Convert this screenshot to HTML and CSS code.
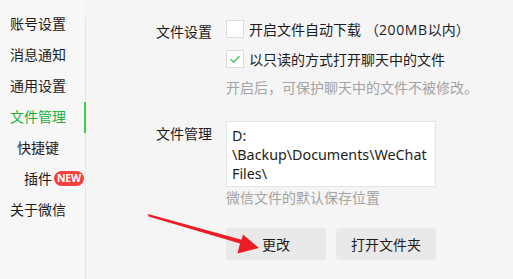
FILE: index.html
```html
<!DOCTYPE html>
<html lang="zh-CN">
<head>
<meta charset="utf-8">
<title>设置</title>
<link rel="stylesheet" href="styles.css">
</head>
<body>
<div class="app">
  <nav class="sidebar">
    <div class="nav-item">账号设置</div>
    <div class="nav-item">消息通知</div>
    <div class="nav-item">通用设置</div>
    <div class="nav-item active">文件管理</div>
    <div class="nav-item sub1">快捷键</div>
    <div class="nav-item sub2">插件<span class="badge">NEW</span></div>
    <div class="nav-item">关于微信</div>
  </nav>
  <main class="content">
    <section class="group">
      <div class="label first">文件设置</div>
      <div class="controls">
        <div class="option"><span class="check"></span><span>开启文件自动下载<span class="paren open">（</span><span class="latin">200MB</span>以内<span class="paren close">）</span></span></div>
        <div class="option"><span class="check on"><svg viewBox="0 0 18 18" width="18" height="18"><path d="M4.5 9.2 L7.6 12 L13.5 6" fill="none" stroke="#3fc45a" stroke-width="1.3"/></svg></span><span>以只读的方式打开聊天中的文件</span></div>
        <div class="hint h1">开启后，可保护聊天中的文件不被修改。</div>
      </div>
    </section>
    <section class="group g2">
      <div class="label second">文件管理</div>
      <div class="controls">
        <div class="path">D:<br>\Backup\Documents\WeChat<br>Files\</div>
        <div class="hint">微信文件的默认保存位置</div>
        <div class="buttons">
          <button class="btn">更改</button>
          <button class="btn">打开文件夹</button>
        </div>
      </div>
    </section>
  </main>
</div>
<svg class="arrow" width="513" height="279" viewBox="0 0 513 279">
  <polygon points="148,214 148.6,216.6 240,243.5 237.5,253.5 259,248 243,234.5 241.5,239.8" fill="#ec1c24"/>
</svg>
</body>
</html>
```
FILE: styles.css
```css
html, body {
  margin: 0;
  padding: 0;
}
body {
  width: 513px;
  height: 279px;
  overflow: hidden;
  font-family: "Noto Sans CJK SC", "Noto Sans", sans-serif;
  font-size: 14px;
  color: #1c1c1c;
  background: #f5f5f5;
  position: relative;
  text-spacing-trim: space-all;
}
.app {
  display: flex;
  height: 279px;
}
.sidebar {
  width: 85px;
  background: #f7f7f7;
  padding-top: 8px;
  box-sizing: border-box;
  position: relative;
  display: flex;
  flex-direction: column;
}
.sidebar::after {
  content: "";
  position: absolute;
  right: -1px;
  top: 17px;
  bottom: 0;
  width: 1px;
  background: #e2e2e2;
}
.nav-item {
  height: 31px;
  line-height: 31px;
  padding-left: 10px;
  position: relative;
  display: flex;
  align-items: center;
  white-space: nowrap;
}
.nav-item.active {
  color: #22b03a;
}
.nav-item.active::after {
  content: "";
  position: absolute;
  right: -1px;
  top: 1px;
  width: 2px;
  height: 31px;
  background: #3ccc4a;
  z-index: 2;
}
.nav-item.sub1 { padding-left: 17px; }
.nav-item.sub2 { padding-left: 24px; }
.badge {
  display: inline-block;
  margin-left: 2px;
  width: 30px;
  height: 15px;
  line-height: 15px;
  border-radius: 8px;
  background: #f2403c;
  color: #fff;
  font-family: "Noto Sans", sans-serif;
  font-size: 10.5px;
  font-weight: 700;
  text-align: center;
  letter-spacing: -0.2px;
}
.content {
  flex: 1;
  padding: 20px 0 0 70px;
  margin-left: 1px;
}
.group {
  display: flex;
}
.label {
  width: 70px;
  flex: none;
  line-height: 20px;
}
.label.first { margin-top: 1px; }
.label.second { margin-top: 2px; }
.controls {
  display: flex;
  flex-direction: column;
}
.option {
  display: flex;
  align-items: center;
  height: 18px;
  margin-bottom: 12px;
  white-space: nowrap;
}
.option:nth-child(2) { margin-bottom: 0; }
.paren {
  display: inline-block;
}
.paren.open { width: 18px; text-align: right; }
.paren.close { width: 16px; text-align: left; }
.latin {
  font-family: "Open Sans", "Noto Sans", sans-serif;
  letter-spacing: 0.6px;
}
.check {
  width: 18px;
  height: 18px;
  box-sizing: border-box;
  border: 1px solid #dcdcdc;
  background: #fff;
  margin-right: 5px;
  flex: none;
  display: flex;
}
.check.on svg { margin: -1px; }
.hint {
  color: #a3a3a3;
  line-height: 20px;
  white-space: nowrap;
}
.hint.h1 { margin-top: 9px; }
.g2 { margin-top: 24px; }
.path {
  width: 210px;
  height: 66px;
  box-sizing: border-box;
  background: #fff;
  border: 1px solid #e4e4e4;
  padding: 4px 0 0 5px;
  line-height: 19px;
  font-family: "Noto Sans", sans-serif;
  font-size: 14.3px;
}
.buttons {
  display: flex;
  gap: 10px;
  margin-top: 21px;
}
.btn {
  width: 100px;
  height: 32px;
  border: none;
  border-radius: 4px;
  background: #e9e9e9;
  font-family: "Noto Sans CJK SC", sans-serif;
  font-size: 14px;
  color: #1c1c1c;
  padding: 0;
}
.arrow {
  position: absolute;
  left: 0;
  top: 0;
  pointer-events: none;
}
```
